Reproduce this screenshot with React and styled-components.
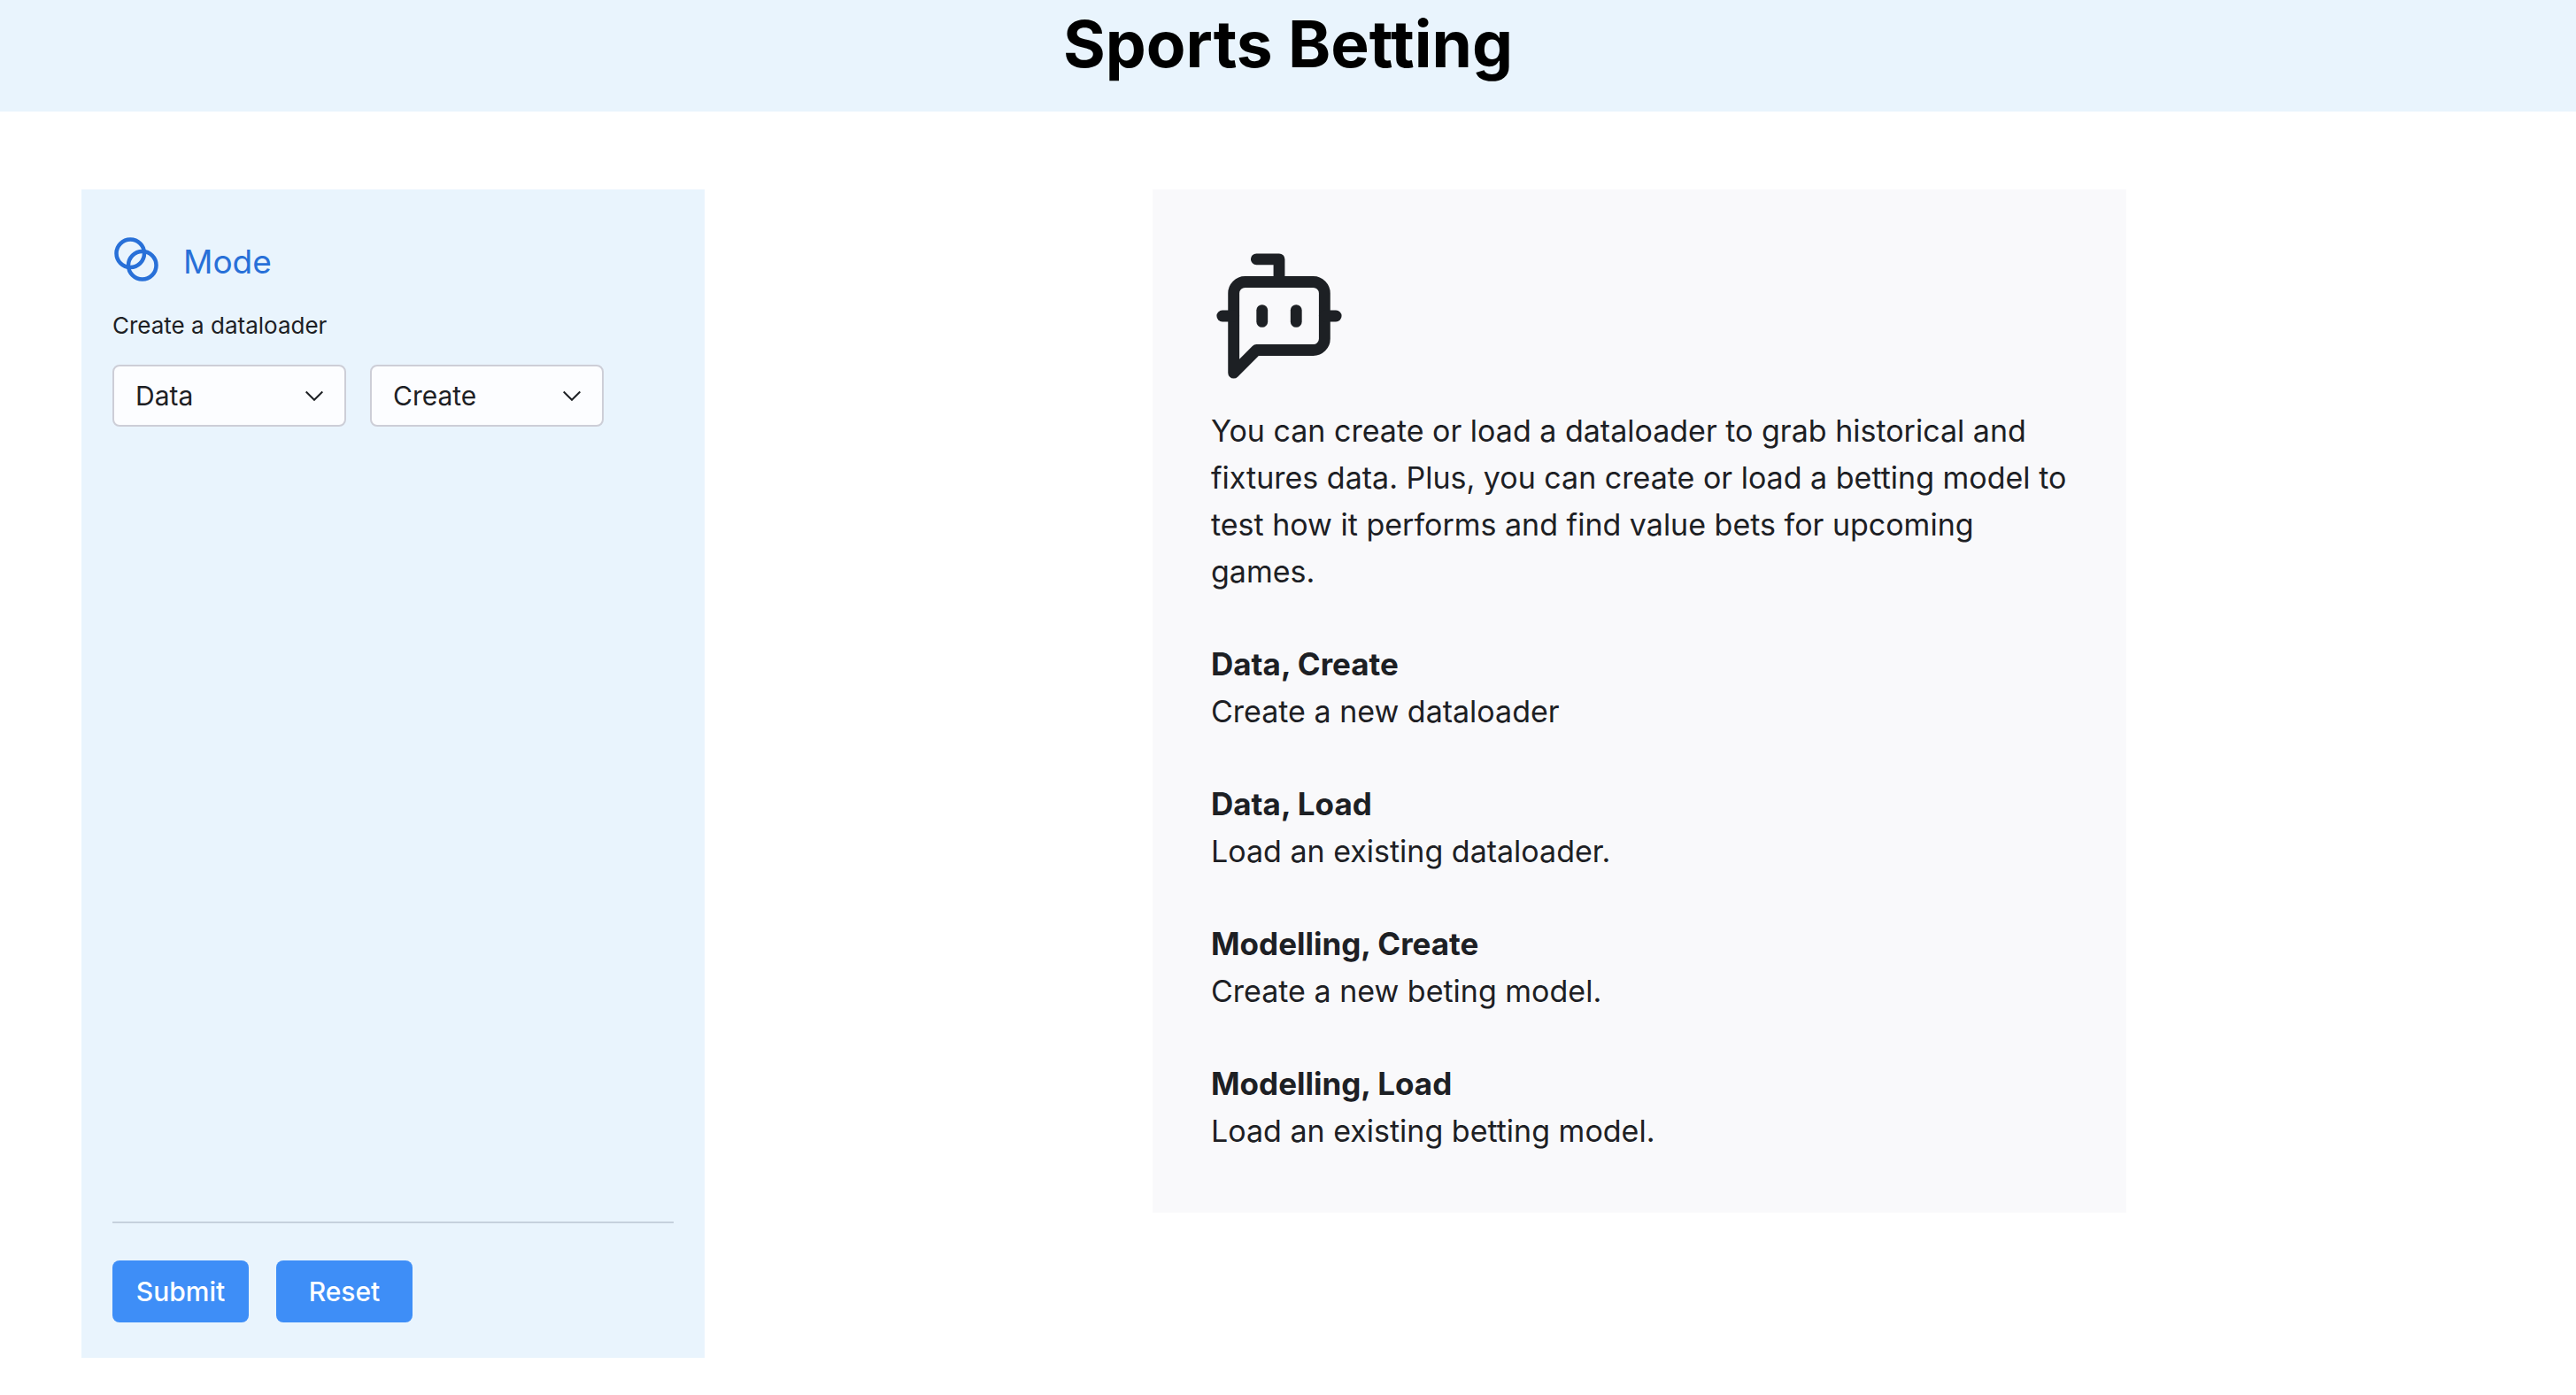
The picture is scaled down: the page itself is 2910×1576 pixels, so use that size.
import React from "react";
import styled, { createGlobalStyle } from "styled-components";
import { Blend } from "lucide-react";

const GlobalStyle = createGlobalStyle`
  *, *::before, *::after { box-sizing: border-box; }
  body {
    margin: 0;
    background: #ffffff;
    color: #1d2024;
    font-family: Inter, "Liberation Sans", sans-serif;
  }
  h1, h2, h3, p { margin: 0; }
`;

const Page = styled.div`
  min-height: 100vh;
  display: flex;
  flex-direction: column;
`;

const Header = styled.header`
  padding: 2px 0 28px;
  background: #e9f4fd;
  text-align: center;
`;

const Title = styled.h1`
  color: #000000;
  font-size: 73px;
  line-height: 96px;
  font-weight: 700;
`;

const Main = styled.main`
  flex: 1;
  display: flex;
  padding: 88px 2px 42px 92px;
`;

const Sidebar = styled.form`
  flex: 0 0 704px;
  display: flex;
  flex-direction: column;
  padding: 52px 35px 40px;
  background: #e9f4fd;
`;

const ModeHeading = styled.h2`
  display: flex;
  align-items: flex-start;
  gap: 26px;
  color: #2870d8;
  font-size: 37px;
  line-height: 60px;
  font-weight: 400;
`;

const Caption = styled.p`
  margin-top: 24px;
  font-size: 26px;
  line-height: 36px;
`;

const SelectRow = styled.div`
  display: flex;
  gap: 27px;
  margin-top: 26px;
`;

const SelectBox = styled.div`
  display: grid;
  width: 264px;
  align-items: center;
  > * { grid-area: 1 / 1; }
  > svg {
    justify-self: end;
    margin-right: 26px;
    pointer-events: none;
  }
`;

const Select = styled.select`
  width: 100%;
  height: 70px;
  padding: 0 60px 0 24px;
  appearance: none;
  border: 2px solid #cdced7;
  border-radius: 8px;
  background: #fcfdff;
  color: inherit;
  font: inherit;
  font-size: 30px;
`;

const Footer = styled.div`
  display: flex;
  gap: 31px;
  margin-top: auto;
  padding-top: 42px;
  border-top: 2px solid #c5d0dd;
`;

const Button = styled.button`
  width: 154px;
  height: 70px;
  padding: 0;
  border: 0;
  border-radius: 8px;
  background: #3e8ef7;
  color: #ffffff;
  font: inherit;
  font-size: 30px;
  font-weight: 500;
`;

const Content = styled.div`
  flex: 1;
  display: flex;
  justify-content: center;
  align-items: flex-start;
`;

const InfoPanel = styled.section`
  width: 100%;
  max-width: 1100px;
  padding: 66px 48px 66px 66px;
  background: #f9f9fb;
  font-size: 34px;
  line-height: 53px;
  > svg {
    display: block;
    margin-bottom: 26px;
  }
`;

const Entry = styled.div`
  margin-top: 52px;
`;

const EntryTitle = styled.h3`
  font-size: 35px;
  font-weight: 700;
`;

const entries = [
  ["Data, Create", "Create a new dataloader"],
  ["Data, Load", "Load an existing dataloader."],
  ["Modelling, Create", "Create a new beting model."],
  ["Modelling, Load", "Load an existing betting model."],
];

function BotIcon({ size }) {
  return (
    <svg width={size} height={size} viewBox="0 0 24 24" fill="none" stroke="currentColor" strokeWidth="2" strokeLinecap="round" strokeLinejoin="round" aria-hidden="true">
      <path d="M12 6V2H8" />
      <path d="m8 18-4 4V8a2 2 0 0 1 2-2h12a2 2 0 0 1 2 2v8a2 2 0 0 1-2 2Z" />
      <path d="M2 12h2" />
      <path d="M9 11v2" />
      <path d="M15 11v2" />
      <path d="M20 12h2" />
    </svg>
  );
}

function Dropdown({ label, options }) {
  return (
    <SelectBox>
      <Select aria-label={label} defaultValue={options[0]}>
        {options.map((option) => (
          <option key={option}>{option}</option>
        ))}
      </Select>
      <svg width="20" height="12" viewBox="0 0 20 12" fill="none" stroke="#1d2024" strokeWidth="2" aria-hidden="true">
        <path d="M0.7 1.5l9.3 9.3 9.3-9.3" />
      </svg>
    </SelectBox>
  );
}

export default function App() {
  return (
    <Page>
      <GlobalStyle />
      <Header>
        <Title>Sports Betting</Title>
      </Header>
      <Main>
        <Sidebar onSubmit={(event) => event.preventDefault()}>
          <ModeHeading>
            <Blend size={54} aria-hidden="true" />
            Mode
          </ModeHeading>
          <Caption>Create a dataloader</Caption>
          <SelectRow>
            <Dropdown label="Subject" options={["Data", "Modelling"]} />
            <Dropdown label="Action" options={["Create", "Load"]} />
          </SelectRow>
          <Footer>
            <Button type="submit">Submit</Button>
            <Button type="reset">Reset</Button>
          </Footer>
        </Sidebar>
        <Content>
          <InfoPanel>
            <BotIcon size={154} />
            <p>
              You can create or load a dataloader to grab historical and fixtures data. Plus, you can create or load a
              betting model to test how it performs and find value bets for upcoming games.
            </p>
            {entries.map(([title, text]) => (
              <Entry key={title}>
                <EntryTitle>{title}</EntryTitle>
                <p>{text}</p>
              </Entry>
            ))}
          </InfoPanel>
        </Content>
      </Main>
    </Page>
  );
}
